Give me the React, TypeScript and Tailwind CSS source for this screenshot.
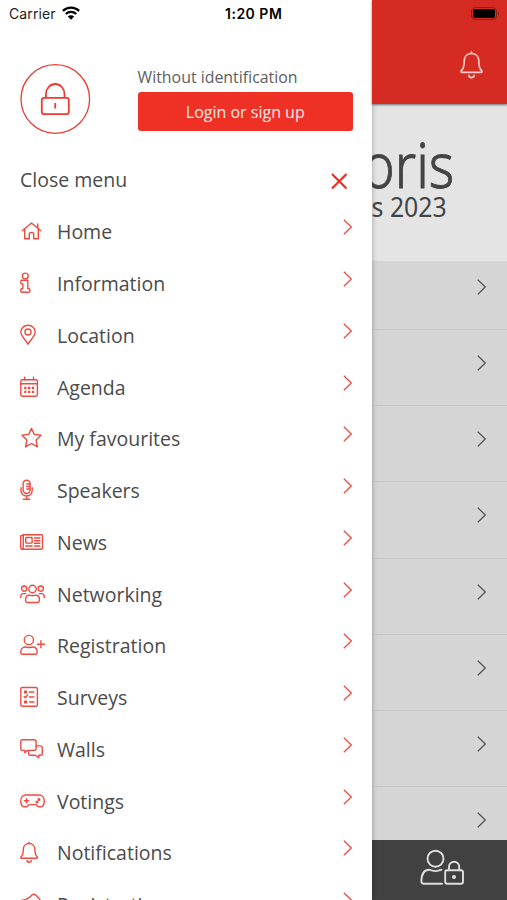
import type { ReactNode } from 'react';

const menu = [
    { label: 'Home', icon: 'home' },
    { label: 'Information', icon: 'info' },
    { label: 'Location', icon: 'pin' },
    { label: 'Agenda', icon: 'calendar' },
    { label: 'My favourites', icon: 'star' },
    { label: 'Speakers', icon: 'mic' },
    { label: 'News', icon: 'news' },
    { label: 'Networking', icon: 'people' },
    { label: 'Registration', icon: 'userPlus' },
    { label: 'Surveys', icon: 'survey' },
    { label: 'Walls', icon: 'chat' },
    { label: 'Votings', icon: 'gamepad' },
    { label: 'Notifications', icon: 'bell' },
    { label: 'Registration', icon: 'ticket' },
];

const bellShape = (
    <>
        <path d="M9.1 2.2v1.3M1.6 18.2h15c.9 0 1.1-.8.5-1.4-1.6-1.5-2.2-2.8-2.2-7.3 0-3.6-2.4-6-5.8-6s-5.8 2.4-5.8 6c0 4.5-.6 5.8-2.2 7.3-.6.6-.4 1.4.5 1.4z" />
        <path d="M7 20.4a2.1 1.8 0 0 0 4.2 0" />
    </>
);

const icons: Record<string, ReactNode> = {
    home: (
        <>
            <path d="M2.500 11.500 11.500 4l9 7.500M17.800 5v4" />
            <path d="M4.700 10v9.700h4.600v-5.200c0-.6.3-.9.900-.9h2.600c.6 0 .9.3.900.900v5.200h4.600V10" />
        </>
    ),
    info: (
        <>
            <circle cx="5.300" cy="5" r="2.900" />
            <path d="M1.500 9.200h6.300v8.300c1.600 0 2.100.5 2.100 1.600v.9c0 .8-.4 1.200-1.200 1.200H2c-.8 0-1.200-.4-1.200-1.200v-.9c0-1.100.5-1.600 2.100-1.600v-4.600c-1.600 0-2.100-.4-2.100-1.500v-1c0-.8.2-1.200.7-1.200z" />
        </>
    ),
    pin: (
        <>
            <path d="M8 21.200c-1.300-2.600-7.200-8.400-7.200-12.200a7.200 6.700 0 0 1 14.400 0c0 3.800-5.900 9.600-7.200 12.200z" />
            <circle cx="8" cy="9" r="3" />
        </>
    ),
    calendar: (
        <>
            <rect x=".8" y="4.800" width="16.600" height="16.400" rx="1.700" />
            <path d="M.8 8.800h16.600M4.700 2.300v2.500M13.500 2.300v2.500" />
            <path strokeWidth="2.300" strokeDasharray="2.300 1.500" strokeLinecap="butt" d="M4.200 13h9.900M4.200 16.800h9.900" />
        </>
    ),
    star: (
        <path d="M11.500 2.500 14.300 8.400l6.700.9-4.900 4.600 1.300 6.900-5.900-3.300-5.900 3.300 1.300-6.900L2 9.300l6.700-.9z" />
    ),
    mic: (
        <>
            <rect x="3.100" y="2.200" width="7" height="13.300" rx="3.500" />
            <path d="M1 9.800v2.400c0 3.500 2.300 5.800 5.600 5.800s5.600-2.300 5.600-5.800V9.800M6.600 18v3.300M3.500 21.300h6.300M6.800 6h3M6.800 8.500h3M6.800 11h3" />
        </>
    ),
    news: (
        <>
            <path d="M3.300 4.700h18.300c.6 0 .9.300.9.900v12.200c0 .9-.5 1.400-1.400 1.400H2.600c-1.200 0-1.900-.7-1.900-1.900V6.400c0-.6.300-.9.900-.9h1.700" />
            <path d="M3.300 4.700v12.600c0 1-.5 1.700-1 1.700" />
            <rect x="5.800" y="7.500" width="6.300" height="5.600" rx=".7" />
            <path d="M14.500 8h5.400M14.500 10.700h5.400M14.500 13.300h5.400M5.800 16h6.300M14.500 16h5.400" />
        </>
    ),
    people: (
        <>
            <circle cx="4.200" cy="6.600" r="2.600" />
            <circle cx="20.800" cy="6.600" r="2.600" />
            <circle cx="12.500" cy="7" r="3.700" />
            <path d="M8.900 13.200c1.300 0 2 .5 3.600.5s2.300-.5 3.600-.5c2 0 3.300 1.800 3.300 4.300v1.300c0 1.100-.6 1.700-1.700 1.700H7.300c-1.100 0-1.700-.6-1.700-1.700v-1.300c0-2.500 1.300-4.300 3.300-4.300z" />
            <path d="M.7 15.500c0-2.400 1-3.900 2.600-3.900h2.400M24.300 15.500c0-2.400-1-3.900-2.600-3.900h-2.400" />
        </>
    ),
    userPlus: (
        <>
            <circle cx="8.900" cy="7" r="4.600" />
            <path d="M5.300 14c1.200 0 1.900.6 3.600.6s2.400-.6 3.600-.6c2.900 0 4.600 2 4.600 4.800v.9c0 1-.6 1.600-1.600 1.600H2.400c-1 0-1.600-.6-1.600-1.600v-.9C.8 16 2.400 14 5.300 14zM17.400 11.300h7M20.900 7.800v7" />
        </>
    ),
    survey: (
        <>
            <rect x=".8" y="2.500" width="16.600" height="18.800" rx="1.500" />
            <path d="M9.500 7h4.400M9.500 12h4.400M9.500 17h4.400M4.100 11.500l1.200 1.200 2.200-2.700" />
            <path fill="currentColor" d="M4.600 6.200h1.900v1.700H4.600zM4.600 16.200h1.900v1.700H4.600z" />
        </>
    ),
    chat: (
        <>
            <path d="M7.300 13.400 4.900 15.800v-2.400H2.800c-1.300 0-2-.7-2-2V4.800c0-1.300.7-2 2-2h11.300c1.300 0 2 .7 2 2v6.600c0 1.300-.7 2-2 2z" />
            <path d="M16.100 8.900h4.200c1.300 0 2 .7 2 2v5.300c0 1.300-.7 2-2 2h-1.600v2.600l-3.400-2.600h-4.800c-1.300 0-2-.7-2-2v-2.800" />
        </>
    ),
    gamepad: (
        <>
            <path d="M6 6h13c3.200 0 5.300 2.700 5.300 6 0 3.600-1.800 6-4.500 6-1.900 0-2.800-.9-3.800-2.400H9C8 17.100 7.100 18 5.200 18 2.500 18 .7 15.600.7 12 .7 8.700 2.800 6 6 6z" />
            <path strokeWidth="1.600" d="M4.500 11.800h4.200M6.600 9.700v4.200" />
            <circle cx="19" cy="10.400" r=".8" fill="currentColor" />
            <circle cx="17" cy="13" r=".8" fill="currentColor" />
        </>
    ),
    bell: bellShape,
    ticket: (
        <path d="M1.500 8.500c2.800-.3 6-1.500 8-3.300L12 3c1.200-1 2.700-.9 3.700.1l3.500 3.500c1 1 1.100 2.500.1 3.700L9 21z" />
    ),
};

function MenuIcon({ name }: { name: string }) {
    return (
        <svg
            width="26"
            height="24"
            viewBox="0 0 26 24"
            fill="none"
            stroke="currentColor"
            strokeWidth="1.400"
            strokeLinecap="round"
            strokeLinejoin="round"
            className="shrink-0 text-[#ee4a40]"
        >
            {icons[name]}
        </svg>
    );
}

function Chevron({ className }: { className: string }) {
    return (
        <svg width="10" height="16" viewBox="0 0 10 16" fill="none" stroke="currentColor" strokeWidth="1.300" className={className}>
            <path d="M.8.8 8.300 8 .8 15.200" />
        </svg>
    );
}

function StatusBar() {
    return (
        <div className="absolute inset-x-0 top-0 z-10 flex h-[27px] items-center text-black font-['Inter',sans-serif]">
            <span className="w-[53px] pl-[9px] text-[14px] tracking-[0.1px] text-[#222]">Carrier</span>
            <svg width="18" height="14" viewBox="0 0 18 14" fill="none" stroke="black" strokeWidth="2.300" className="ml-[9px] mb-0.5">
                <path d="M.9 4.900a11.500 11.500 0 0 1 16.200 0M3.800 8a7.500 7.500 0 0 1 10.400 0" />
                <path fill="black" stroke="none" d="M9 13.700 5.800 10.500a4.600 4.600 0 0 1 6.400 0z" />
            </svg>
            <span className="ml-[145px] w-[62px] whitespace-nowrap text-[14px] font-semibold tracking-[0.5px]">1:20 PM</span>
            <svg width="30" height="13" viewBox="0 0 30 13" className="ml-auto mr-1.5">
                <rect x=".5" y=".5" width="25" height="12" rx="3.500" fill="none" stroke="#8f1d18" />
                <rect x="2" y="2" width="22" height="9" rx="2" />
                <path d="M27 4.500q2.200 2 0 4z" fill="#8f1d18" />
            </svg>
        </div>
    );
}

function Drawer() {
    return (
        <aside className="z-[1] flex w-[372px] shrink-0 flex-col bg-white pt-16 shadow-[0_0_5px_rgba(0,0,0,0.3)]">
            <div className="flex h-[70px] shrink-0 items-start pl-5">
                <svg width="71" height="70" viewBox="0 0 71 70" fill="none" stroke="#ec3b32" strokeWidth="1.800">
                    <circle cx="35.300" cy="35" r="34.300" strokeWidth="1.300" />
                    <rect x="21.800" y="33.800" width="27" height="16.300" rx="2" />
                    <path d="M25.900 33.800v-3.500a9.300 10.300 0 0 1 18.600 0v3.500M35.200 39v5.500" />
                </svg>
                <div className="ml-[46.5px] w-[215.5px]">
                    <div className="mt-0.5 text-[15.9px] leading-[22px] whitespace-nowrap text-[#5e5e5e]">Without identification</div>
                    <button className="mt-1 h-[39px] w-full rounded-[3px] bg-[#ef3025] text-[16px] text-[#ffe9e5]">
                        Login or sign up
                    </button>
                </div>
            </div>
            <div className="flex h-[71.6px] shrink-0 items-center justify-between pr-6 pl-5 pt-[19px]">
                <span className="text-[19.5px] text-[#4b4b4b]">Close menu</span>
                <svg width="18" height="18" viewBox="0 0 18 18" fill="none" stroke="#ee2e25" strokeWidth="2.200" className="mt-[3px]">
                    <path d="m2 2 14.500 14.500M16.500 2 2 16.500" />
                </svg>
            </div>
            <nav>
                {menu.map((item, idx) => (
                    <a key={item.label + idx} className="flex h-[51.75px] items-center pl-5">
                        <MenuIcon name={item.icon} />
                        <span className="ml-[11px] flex-1 pt-px text-[19.5px] text-[#4b4b4b]">{item.label}</span>
                        <Chevron className="mr-[19px] mb-2 text-[#ee4a40]" />
                    </a>
                ))}
            </nav>
        </aside>
    );
}

function AppBehind() {
    return (
        <main className="flex min-w-0 flex-1 flex-col bg-[#d5d5d5]">
            <header className="z-[1] flex h-[103.5px] shrink-0 items-start justify-end bg-[#d62b22] pt-[50px] pr-[23px] shadow-[0_1px_2px_rgba(0,0,0,0.5)]">
                <svg width="25" height="29" viewBox="-.8 .8 19.800 22.500" preserveAspectRatio="none" fill="none" stroke="#f8cbc7" strokeWidth="1.300" strokeLinejoin="round" strokeLinecap="round">
                    {bellShape}
                </svg>
            </header>
            {/* event logo, partly covered by the drawer */}
            <div className="flex h-[157px] shrink-0 flex-col items-end overflow-hidden bg-[#e4e4e4] pt-[27px] font-['Noto_Sans',sans-serif] text-[#444]">
                <div className="mr-[52.5px] flex h-[66px] origin-right scale-x-[0.86] items-center whitespace-nowrap text-[63px] font-light leading-none [-webkit-text-stroke:0.9px_#444]">oris</div>
                <div className="mr-[60px] -mt-1 flex h-7 origin-right scale-x-[0.92] items-center whitespace-nowrap text-[27px] leading-none">s 2023</div>
            </div>
            <div className="flex min-h-0 flex-1 flex-col overflow-hidden">
                {Array.from({ length: 8 }, (_, idx) => (
                    <div key={idx} className={`flex shrink-0 justify-end border-b-[1.5px] border-[#c6c6c6] pr-5 ${idx === 0 ? 'h-[69.5px] pt-[18.5px]' : 'h-[76.2px] pt-[25px]'}`}>
                        <Chevron className="text-[#555]" />
                    </div>
                ))}
            </div>
            <footer className="flex h-[60px] shrink-0 justify-end bg-[#414141] pt-[9px] pr-[42px]">
                <svg width="45" height="37" viewBox="0 0 45 37" fill="none" stroke="#dedede" strokeWidth="1.900" strokeLinecap="round" strokeLinejoin="round">
                    <circle cx="15.500" cy="9.700" r="8" />
                    <path d="M22 34.700H3.500c-1.400 0-2.100-.7-2.100-2.100 0-7 2.600-11.800 7.800-11.800 2 0 3.200 1.300 6.300 1.300s4.100-1.300 6-1.300" />
                    <rect x="25.200" y="21.300" width="17.800" height="13.500" rx="2" />
                    <path d="M29 21.300v-3.500a5.100 5.100 0 0 1 10.200 0v3.500" />
                    <circle cx="34" cy="28" r="2" fill="#dedede" stroke="none" />
                </svg>
            </footer>
        </main>
    );
}

export default function App() {
    return (
        <div className="relative flex h-[900px] w-[507px] overflow-hidden bg-white font-['Open_Sans',sans-serif]">
            <StatusBar />
            <Drawer />
            <AppBehind />
        </div>
    );
}
